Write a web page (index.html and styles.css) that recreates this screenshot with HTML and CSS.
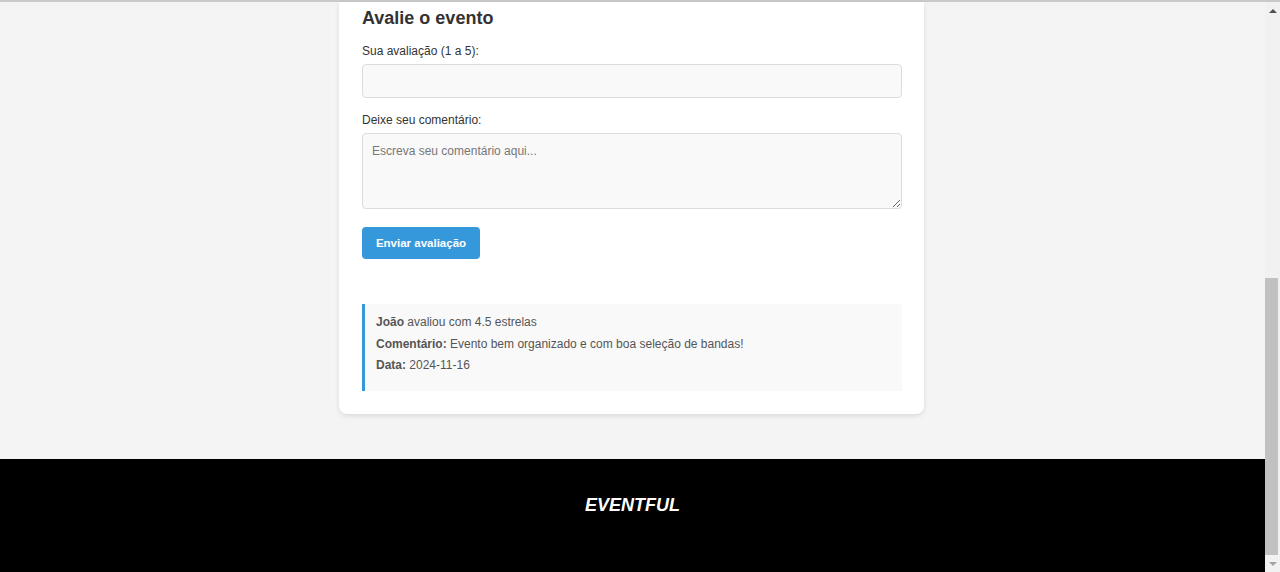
FILE: index.html
```html
<!DOCTYPE html>
<html lang="pt-BR">
<head>
<meta charset="utf-8">
<title>Avalie o evento</title>
<link rel="stylesheet" href="styles.css">
</head>
<body>
<div class="topline"></div>
<div class="window">
  <div class="page">
    <main class="card">
      <h3 class="card-title">Avalie o evento</h3>
      <form class="form">
        <label class="label" for="nota">Sua avaliação (1 a 5):</label>
        <input class="input" id="nota" type="text">
        <label class="label" for="comentario">Deixe seu comentário:</label>
        <textarea class="textarea" id="comentario" placeholder="Escreva seu comentário aqui..."></textarea>
        <button class="btn" type="button">Enviar avaliação</button>
      </form>
      <div class="review">
        <p class="review-line"><strong>João</strong> avaliou com 4.5 estrelas</p>
        <p class="review-line"><strong>Comentário:</strong> Evento bem organizado e com boa seleção de bandas!</p>
        <p class="review-line"><strong>Data:</strong> 2024-11-16</p>
      </div>
    </main>
    <footer class="footer">
      <p class="brand">EVENTFUL</p>
    </footer>
  </div>
  <div class="scrollbar">
    <div class="arrow arrow-up"></div>
    <div class="track"><div class="thumb"></div></div>
    <div class="arrow arrow-down"></div>
  </div>
</div>
</body>
</html>
```
FILE: styles.css
```css
html, body {
  margin: 0;
  padding: 0;
  height: 572px;
  overflow: hidden;
}
body {
  background: #f4f4f4;
  font-family: "Liberation Sans", Arial, sans-serif;
  color: #333;
  display: flex;
  flex-direction: column;
}
.topline {
  height: 2px;
  background: #c9c9c9;
  flex: none;
}
.window {
  flex: 1;
  display: flex;
  min-height: 0;
}
.page {
  flex: 1;
  display: flex;
  flex-direction: column;
  min-width: 0;
}
.card {
  width: 585px;
  box-sizing: border-box;
  margin: 0 0 0 339px;
  background: #fff;
  border-radius: 0 0 8px 8px;
  box-shadow: 0 2px 5px rgba(0,0,0,0.1);
  padding: 6px 22px 23px 23px;
}
.card-title {
  margin: 0;
  font-size: 18px;
  line-height: 21px;
  font-weight: bold;
  color: #333;
}
.form {
  display: flex;
  flex-direction: column;
  align-items: flex-start;
  padding-top: 15px;
}
.label {
  font-size: 12px;
  line-height: 14px;
  color: #333;
  margin-bottom: 6px;
}
.input, .textarea {
  width: 540px;
  box-sizing: border-box;
  border: 1px solid #dcdcdc;
  border-radius: 4px;
  background: #f9f9f9;
  font-family: "Liberation Sans", Arial, sans-serif;
  font-size: 12px;
  padding: 10px 9px;
  margin: 0 0 15px 0;
}
.input {
  height: 34px;
}
.textarea {
  height: 76px;
  margin-bottom: 18px;
  resize: vertical;
  display: block;
}
.textarea::placeholder {
  color: #777;
}
.btn {
  height: 32px;
  width: 118px;
  border: 0;
  border-radius: 4px;
  background: #3498db;
  color: #fff;
  font-family: "Liberation Sans", Arial, sans-serif;
  font-size: 11.5px;
  font-weight: bold;
  padding: 0;
}
.review {
  margin-top: 45px;
  background: #f9f9f9;
  border-left: 3px solid #3498db;
  padding: 8px 12px 14px 11px;
}
.review-line {
  margin: 0;
  font-size: 12px;
  line-height: 21.5px;
  color: #555;
}
.review-line strong {
  color: #555;
}
.footer {
  margin-top: 45px;
  background: #000;
  flex: 1;
  display: flex;
  justify-content: center;
  padding-top: 36px;
}
.brand {
  margin: 0;
  color: #fff;
  font-size: 18px;
  line-height: 20px;
  font-weight: bold;
  font-style: italic;
}
.scrollbar {
  width: 15px;
  flex: none;
  background: #f1f1f1;
  display: flex;
  flex-direction: column;
}
.arrow {
  height: 17px;
  flex: none;
  display: flex;
  align-items: center;
  justify-content: center;
}
.arrow-up::before {
  content: "";
  border-left: 4px solid transparent;
  border-right: 4px solid transparent;
  border-bottom: 4px solid #505050;
}
.arrow-down::before {
  content: "";
  border-left: 4px solid transparent;
  border-right: 4px solid transparent;
  border-top: 4px solid #a3a3a3;
}
.track {
  flex: 1;
  display: flex;
  flex-direction: column;
  justify-content: flex-end;
  padding: 0 2px 0 0;
}
.thumb {
  height: 277px;
  background: #c1c1c1;
}
```
